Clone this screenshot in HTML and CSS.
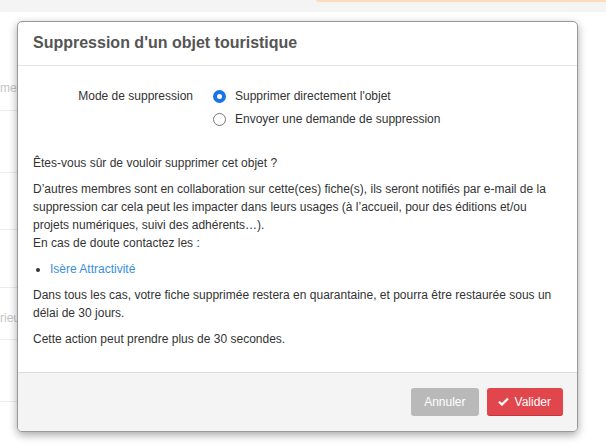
FILE: index.html
```html
<!DOCTYPE html>
<html lang="fr">
<head>
    <meta charset="UTF-8">
    <title>Suppression d'un objet touristique</title>
    <link rel="stylesheet" href="styles.css">
</head>
<body>
    <div class="page">
        <div class="topbar">
            <div class="notice"></div>
        </div>
        <div class="list">
            <div class="list-row r1"><span class="cell-text">men</span></div>
            <div class="list-row r2"></div>
            <div class="list-row r3"></div>
            <div class="list-row r4"></div>
            <div class="list-row r5"><span class="cell-text">rieu</span></div>
            <div class="list-row r6"></div>
        </div>
    </div>

    <div class="modal">
        <div class="modal-header">
            <h4 class="modal-title">Suppression d'un objet touristique</h4>
        </div>
        <div class="modal-body">
            <div class="form-row">
                <div class="form-label">Mode de suppression</div>
                <div class="radios">
                    <label class="radio"><span class="radio-dot checked"></span>Supprimer directement l'objet</label>
                    <label class="radio"><span class="radio-dot"></span>Envoyer une demande de suppression</label>
                </div>
            </div>
            <p>Êtes-vous sûr de vouloir supprimer cet objet ?</p>
            <p>D’autres membres sont en collaboration sur cette(ces) fiche(s), ils seront notifiés par e-mail de la suppression car cela peut les impacter dans leurs usages (à l’accueil, pour des éditions et/ou projets numériques, suivi des adhérents…).<br>En cas de doute contactez les :</p>
            <ul class="contacts">
                <li><a href="#">Isère Attractivité</a></li>
            </ul>
            <p>Dans tous les cas, votre fiche supprimée restera en quarantaine, et pourra être restaurée sous un délai de 30 jours.</p>
            <p>Cette action peut prendre plus de 30 secondes.</p>
        </div>
        <div class="modal-footer">
            <button class="btn btn-cancel">Annuler</button>
            <button class="btn btn-danger">
                <svg class="check" viewBox="0 0 12 10" width="11" height="9"><path d="M1 5.2 L4.3 8.4 L11 1.6" fill="none" stroke="#fff" stroke-width="2.4"/></svg>
                Valider
            </button>
        </div>
    </div>
</body>
</html>
```

FILE: styles.css
```css
body {
    margin: 0;
    font-family: 'Liberation Sans', Arial, sans-serif;
    font-size: 12px;
    color: #333;
    background: #fff;
}
.page {
    height: 445px;
    overflow: hidden;
}
.topbar {
    height: 12px;
    background: #f4f4f4;
    display: flex;
    justify-content: flex-end;
}
.notice {
    width: 290px;
    height: 2px;
    background: #fddcbe;
    border-bottom-left-radius: 4px;
}
/* liste en arriere-plan, en grande partie sous la modale */
.list {
    width: 40px;
    padding-top: 55px;
}
.list-row {
    border-bottom: 1px solid #ececec;
    display: flex;
    align-items: center;
}
.r1 { height: 43px; }
.r2 { height: 61px; }
.r3 { height: 56px; }
.r4 { height: 57px; }
.r5 { height: 51px; }
.r6 { height: 61px; }
.cell-text {
    color: #c4c4c4;
    white-space: nowrap;
}
.r1 .cell-text { margin-top: -2px; }
.r5 .cell-text { margin-top: 8px; }

/* boite de dialogue */
.modal {
    position: absolute;
    left: 17px;
    top: 21px;
    width: 559px;
    background: #fff;
    border: 1px solid #999;
    border-radius: 5px;
    box-shadow: 0 3px 9px rgba(0, 0, 0, 0.35);
    overflow: hidden;
}
.modal-header {
    padding: 11px 15px 12px;
    border-bottom: 1px solid #e5e5e5;
}
.modal-title {
    margin: 0;
    font-size: 16px;
    line-height: 20px;
    font-weight: bold;
    color: #555;
}
.modal-body {
    padding: 21px 15px 16px;
}
.form-row {
    display: flex;
    gap: 20px;
    margin-bottom: 25px;
}
.form-label {
    width: 160px;
    text-align: right;
    line-height: 19px;
}
.radios {
    display: flex;
    flex-direction: column;
    gap: 4px;
}
.radio {
    display: flex;
    align-items: center;
    gap: 9px;
    line-height: 19px;
}
.radio-dot {
    width: 13px;
    height: 13px;
    border: 1px solid #777;
    border-radius: 50%;
    box-sizing: border-box;
    display: inline-block;
}
.radio-dot.checked {
    border: 4px solid #1a73e8;
    background: #fff;
}
.modal-body p {
    margin: 0 0 8px;
    line-height: 18px;
}
.contacts {
    margin: 0 0 8px;
    padding-left: 17px;
    line-height: 18px;
}
.contacts a {
    color: #3a8fd9;
    text-decoration: none;
}
.modal-footer {
    background: #f4f4f4;
    border-top: 1px solid #ddd;
    padding: 15px 14px;
    display: flex;
    justify-content: flex-end;
    gap: 8px;
}
.btn {
    font-family: 'Liberation Sans', Arial, sans-serif;
    font-size: 12px;
    color: #fff;
    border: none;
    border-radius: 3px;
    height: 28px;
    padding: 0 13px;
    display: flex;
    align-items: center;
    gap: 6px;
}
.btn-cancel {
    background: #b9b9b9;
}
.btn-danger {
    background: #e0464c;
    border-bottom: 1px solid #c4363b;
    padding: 0 12px 0 11px;
}
```
